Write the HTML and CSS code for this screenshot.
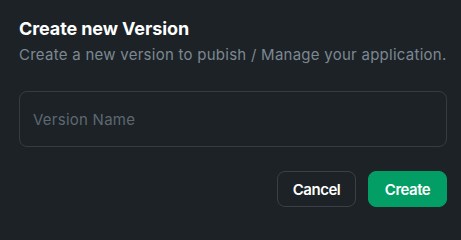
FILE: index.html
```html
<!DOCTYPE html>
<html lang="en">
<head>
<meta charset="utf-8">
<title>Create new Version</title>
<link rel="stylesheet" href="styles.css">
</head>
<body>
<div class="dialog">
  <h2 class="title">Create new Version</h2>
  <p class="subtitle">Create a new version to pubish / Manage your application.</p>
  <input class="field" type="text" placeholder="Version Name">
  <div class="actions">
    <button class="btn btn-cancel" type="button">Cancel</button>
    <button class="btn btn-create" type="button">Create</button>
  </div>
</div>
</body>
</html>
```
FILE: styles.css
```css
html, body {
  margin: 0;
  background: #1c2226;
}
body {
  font-family: "Inter", "Noto Sans", sans-serif;
}
.dialog {
  padding: 17px 14px 0 19px;
  display: flex;
  flex-direction: column;
}
.title {
  margin: 0;
  font-size: 18px;
  line-height: 24px;
  font-weight: 700;
  letter-spacing: -0.1px;
  color: #ffffff;
}
.subtitle {
  margin: 4px 0 0;
  font-size: 15px;
  line-height: 20px;
  letter-spacing: 0.26px;
  white-space: nowrap;
  color: #7d8892;
}
.field {
  margin-top: 26px;
  box-sizing: border-box;
  height: 56px;
  width: 100%;
  padding: 0 13px;
  border: 1px solid #363c41;
  border-radius: 8px;
  background: #1c2226;
  color: #e6e8ea;
  font-family: inherit;
  font-size: 15px;
  letter-spacing: 0.25px;
  outline: none;
}
.field::placeholder {
  color: #5e6871;
}
.actions {
  margin-top: 24px;
  display: flex;
  justify-content: flex-end;
  gap: 12px;
}
.btn {
  box-sizing: border-box;
  width: 79px;
  height: 36px;
  border-radius: 8px;
  font-family: inherit;
  font-size: 15px;
  font-weight: 600;
  letter-spacing: -0.5px;
  color: #ffffff;
  padding: 0;
  cursor: pointer;
}
.btn-cancel {
  background: #1c2226;
  border: 1px solid #3a4045;
}
.btn-create {
  background: #039e66;
  border: 1px solid #039e66;
}
```
